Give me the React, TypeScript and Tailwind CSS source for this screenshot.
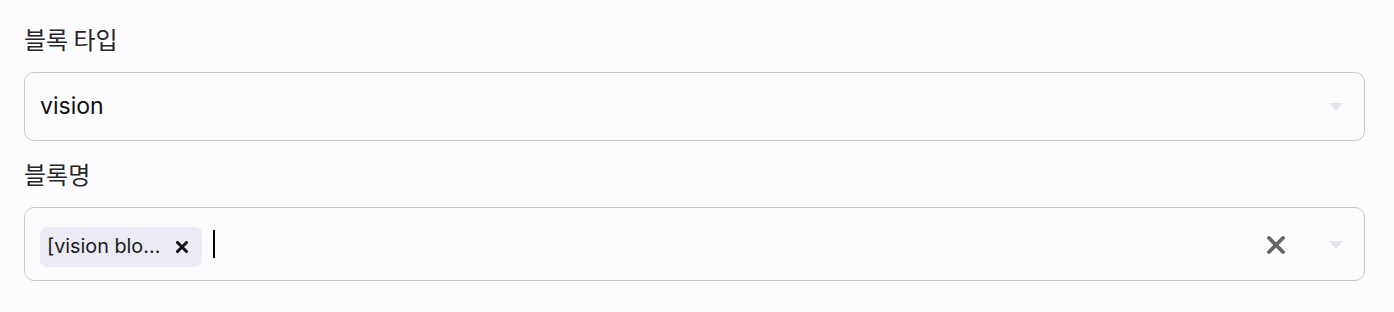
export default function App() {
  return (
    <div className="min-h-screen w-full bg-[#fcfcfe] pl-6 pr-[29px] pt-[23px]" style={{ fontFamily: 'Inter, "Noto Sans CJK KR", sans-serif' }}>
      {/* 블록 타입 */}
      <label className="block h-8 leading-8 text-[24px] text-[#262626]" style={{ fontFamily: '"Noto Sans CJK KR", sans-serif' }}>
        블록 타입
      </label>
      <div className="mt-[17px] flex h-[69px] items-center rounded-[10px] border border-[#cacaca] bg-[#fcfcfe] pl-[15px] pr-[21px]">
        <span className="flex-1 text-[23px] text-[#111]">vision</span>
        <svg width="14" height="8" viewBox="0 0 14 8">
          <path d="M0 0h14L7 8z" fill="#e4e3ef" />
        </svg>
      </div>

      {/* 블록명 */}
      <label className="mt-[17px] block h-8 leading-8 text-[24px] text-[#262626]" style={{ fontFamily: '"Noto Sans CJK KR", sans-serif' }}>
        블록명
      </label>
      <div className="mt-[17px] flex h-[74px] items-start rounded-[10px] border border-[#cacaca] bg-[#fcfcfe] pl-[15px] pr-[21px] pt-[19px]">
        <div className="flex h-10 w-[162px] items-center rounded-[7px] bg-[#ebeaf5] pl-[7px]">
          <span className="flex-1 text-[19.8px] text-[#1a1a1a]">[vision blo...</span>
          <svg className="mr-[14px]" width="12" height="12" viewBox="0 0 12 12">
            <path d="M1.5 1.5l9 9M10.5 1.5l-9 9" stroke="#111" strokeWidth="3" strokeLinecap="round" />
          </svg>
        </div>
        <div className="ml-[11px] mt-[3px] h-7 w-[2px] bg-black" />
        <div className="flex-1" />
        <div className="mt-[9px] flex items-center">
          <svg width="18" height="18" viewBox="0 0 18 18">
            <path d="M2 2l14 14M16 2L2 16" stroke="#666" strokeWidth="3.8" strokeLinecap="round" />
          </svg>
          <svg className="ml-[44px]" width="14" height="8" viewBox="0 0 14 8">
            <path d="M0 0h14L7 8z" fill="#e4e3ef" />
          </svg>
        </div>
      </div>
    </div>
  );
}
